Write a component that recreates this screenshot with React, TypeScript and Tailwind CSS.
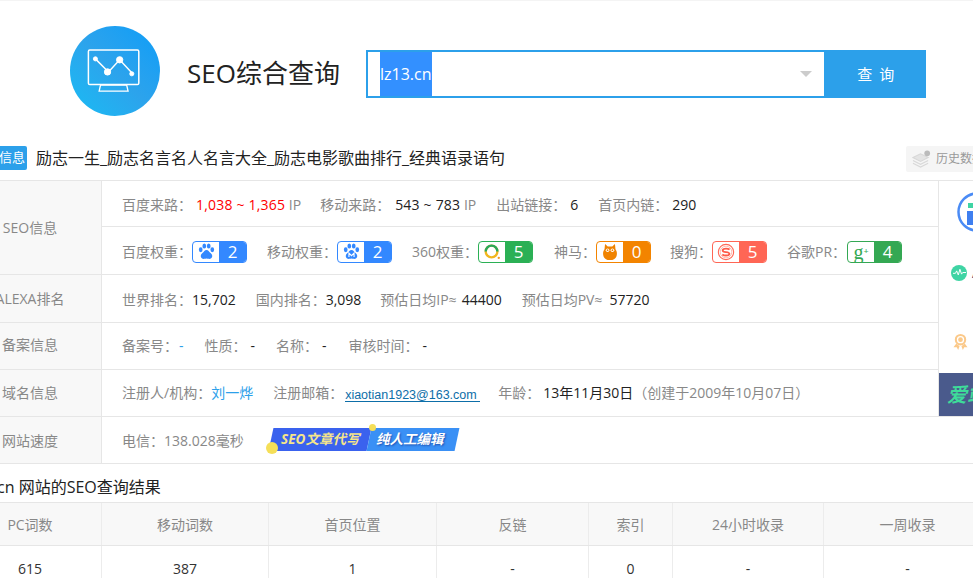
import React from "react";

const FONT = { fontFamily: '"Open Sans","Noto Sans CJK SC",sans-serif' };

function Paw({ m = false }: { m?: boolean }) {
  return (
    <svg viewBox="0 0 20 20" className="w-[17px] h-[17px]">
      <g fill="#3388ff">
        <ellipse cx="3.2" cy="8" rx="2.2" ry="2.9" />
        <ellipse cx="7.4" cy="3.6" rx="2.2" ry="3" />
        <ellipse cx="12.6" cy="3.6" rx="2.2" ry="3" />
        <ellipse cx="16.8" cy="8" rx="2.2" ry="2.9" />
        <path d="M10 8.2c2.2 0 3 2 4.4 3.3 1.6 1.5 2.6 2.6 2.3 4.5-.3 2-2.3 3-4.2 2.6-1-.2-1.6-.5-2.5-.5s-1.500.3-2.500.5c-1.900.4-3.900-.6-4.200-2.600-.3-1.900.7-3 2.300-4.500C7 10.200 7.800 8.200 10 8.200z" />
      </g>
      {m && <path d="M7 16.500v-4.500l3 3 3-3v4.500" fill="none" stroke="#fff" strokeWidth="1.300" />}
    </svg>
  );
}

function Ring360() {
  return (
    <svg viewBox="0 0 20 20" className="w-[18px] h-[18px]">
      <circle cx="9.500" cy="9.500" r="6.500" fill="none" stroke="#f2b61e" strokeWidth="2.600" />
      <path d="M3 9.500a6.500 6.500 0 0 1 13 0" fill="none" stroke="#2aa85a" strokeWidth="2.600" />
      <circle cx="17.500" cy="16.500" r="1.300" fill="#f29a1e" />
    </svg>
  );
}

function Owl() {
  return (
    <svg viewBox="0 0 20 20" className="w-[18px] h-[18px]">
      <path d="M4.500 1l3 3h5l3-3 .6 6c1.400 1.800 1.900 4 1.400 6.500-.7 3.700-3.800 5.500-7.500 5.500s-6.800-1.800-7.500-5.500C2 11 2.500 8.800 3.900 7z" fill="#f08300" />
      <circle cx="7.300" cy="8" r="2" fill="#fff" />
      <circle cx="12.700" cy="8" r="2" fill="#fff" />
      <circle cx="7.300" cy="8" r="1" fill="#f08300" />
      <circle cx="12.700" cy="8" r="1" fill="#f08300" />
    </svg>
  );
}

function Sogou() {
  return (
    <svg viewBox="0 0 20 20" className="w-[18px] h-[18px]">
      <circle cx="10" cy="10" r="8.500" fill="none" stroke="#ff6a58" strokeWidth="1.200" />
      <circle cx="10" cy="10" r="6.500" fill="none" stroke="#ffb3a8" strokeWidth="1" />
      <path d="M14 7.300c-1-.8-2.500-1.100-4-1.100-2 0-3.700.7-3.700 2 0 2.700 7.500 1 7.500 3.700 0 1.300-1.800 2-3.800 2-1.600 0-3.100-.4-4.100-1.200" fill="none" stroke="#ff5a48" strokeWidth="2" />
    </svg>
  );
}

function Badge({
  color,
  value,
  children,
}: {
  color: string;
  value: string;
  children: React.ReactNode;
}) {
  return (
    <span
      className="inline-flex w-[55px] h-[22px] rounded-[4px] border overflow-hidden bg-white"
      style={{ borderColor: color }}
    >
      <span className="w-[26px] flex items-center justify-center">{children}</span>
      <span
        className="flex-1 flex items-center justify-center text-white text-[17px]"
        style={{ backgroundColor: color }}
      >
        {value}
      </span>
    </span>
  );
}

function L({ children }: { children: React.ReactNode }) {
  return <span className="text-[#888888]">{children}</span>;
}

function V({ children, className = "" }: { children: React.ReactNode; className?: string }) {
  return <span className={`text-[#222222] ${className}`}>{children}</span>;
}

function Row({
  label,
  h,
  lc = "",
  children,
}: {
  label: string;
  h: string;
  lc?: string;
  children: React.ReactNode;
}) {
  return (
    <div className={`flex border-b border-[#e6e6e6] ${h}`}>
      <div
        className={`w-[143px] shrink-0 bg-[#f8f8f8] border-r border-[#e6e6e6] flex items-center justify-center text-[14px] text-[#888888] ${lc}`}
      >
        {label}
      </div>
      {children}
    </div>
  );
}

const cols = [
  ["PC词数", "615"],
  ["移动词数", "387"],
  ["首页位置", "1"],
  ["反链", "-"],
  ["索引", "0"],
  ["24小时收录", "-"],
  ["一周收录", "-"],
];
const widths = [
  "w-[143px]",
  "w-[167px]",
  "w-[168px]",
  "w-[152px]",
  "w-[84px]",
  "w-[151px]",
  "w-[168px]",
];

export default function App() {
  return (
    <div
      className="w-[973px] h-[578px] overflow-hidden bg-white relative border-t border-[#f4f4f4]"
      style={FONT}
    >
      <div className="w-[1200px] ml-[-41px]">
        {/* header */}
        <div className="flex items-center pt-[25px] pl-[111px]">
          <div className="w-[90px] h-[90px] rounded-full bg-gradient-to-tr from-[#16bcf4] via-[#2ca3ec] to-[#069df8] flex items-center justify-center">
            <svg viewBox="0 0 60 48" className="w-[56px] h-[46px]" fill="none" stroke="#ffffff">
              <rect x="1.500" y="1.500" width="54" height="37" rx="1.500" strokeWidth="1.600" />
              <path d="M13 45.500l1.500-6.500h28l1.500 6.500z" strokeWidth="1.400" />
              <path d="M9 11l14 14 12-13 14 15" strokeWidth="1.600" />
              <circle cx="9" cy="11" r="2.200" fill="#fff" />
              <circle cx="22" cy="25" r="3.400" fill="#fff" />
              <circle cx="35" cy="12" r="3.400" fill="#fff" />
              <circle cx="48" cy="27" r="2.200" fill="#fff" />
            </svg>
          </div>
          <div className="ml-[27px] mt-[4px] text-[26px] text-[#222222] w-[179px] leading-none">SEO综合查询</div>
          <div className="flex w-[560px] h-[48px] border-2 border-[#2ca0ea] mt-[6px]">
            <div className="flex-1 flex items-stretch pl-[12px] relative">
              <span className="bg-[#3390ff] text-white text-[16px] flex items-center w-[52px] whitespace-nowrap">
                lz13.cn
              </span>
              <span className="absolute right-[12px] top-[19px] w-0 h-0 border-x-[6px] border-x-transparent border-t-[6px] border-t-[#cccccc]" />
            </div>
            <button className="w-[100px] bg-[#2ca0ea] text-white text-[15px] tracking-[1.5px] pl-[5px]">
              查&nbsp;询
            </button>
          </div>
        </div>

        {/* title */}
        <div className="flex items-center mt-[30px] h-[26px] mb-[8px]">
          <span className="ml-[12px] mt-[-2px] w-[56px] h-[24px] rounded-[2px] bg-[#2ca0ea] text-white text-[13px] flex items-center justify-center whitespace-nowrap">
            网站信息
          </span>
          <span className="ml-[9px] mt-[-2px] text-[16px] text-[#222222] w-[870px] whitespace-nowrap">
            励志一生_励志名言名人名言大全_励志电影歌曲排行_经典语录语句
          </span>
          <span className="w-[100px] h-[26px] bg-[#f5f5f5] rounded-[2px] flex items-center pl-[6px] gap-[5px] text-[12px] text-[#999999] whitespace-nowrap">
            <svg viewBox="0 0 20 20" className="w-[19px] h-[19px]" fill="none" stroke="#d8d8d8" strokeWidth="1.200">
              <path d="M1 8l8-4 8 4-8 4z" fill="#e4e4e4" />
              <path d="M1 11l8 4 8-4M1 14l8 4 8-4" />
              <circle cx="16" cy="3.500" r="3" fill="#bbbbbb" stroke="none" />
            </svg>
            历史数据
          </span>
        </div>

        {/* info table */}
        <div className="border-t border-[#e6e6e6] text-[14px]">
          <div className="flex">
            <div className="w-[979px] shrink-0">
              <Row label="SEO信息" h="h-[94px]">
                <div className="flex-1 flex flex-col">
                  <div className="h-[46px] flex items-center pl-[20px] pt-[2px] border-b border-[#e6e6e6]">
                    <L>百度来路：</L>
                    <span className="ml-[4px] text-[#ff0000] tracking-[0.2px]">1,038 ~ 1,365</span>
                    <L>&nbsp;IP</L>
                    <span className="ml-[19px]"><L>移动来路：</L></span>
                    <V className="ml-[5px] tracking-[0.2px]">543 ~ 783</V>
                    <L>&nbsp;IP</L>
                    <span className="ml-[20px]"><L>出站链接：</L></span>
                    <V className="ml-[4px]">6</V>
                    <span className="ml-[20px]"><L>首页内链：</L></span>
                    <V className="ml-[4px]">290</V>
                  </div>
                  <div className="flex-1 flex items-center pl-[20px] pt-[2px]">
                    <L>百度权重：</L>
                    <Badge color="#3388ff" value="2"><Paw /></Badge>
                    <span className="ml-[20px]"><L>移动权重：</L></span>
                    <Badge color="#3388ff" value="2"><Paw m /></Badge>
                    <span className="ml-[20px] w-[66px]"><L>360权重：</L></span>
                    <Badge color="#2bb055" value="5"><Ring360 /></Badge>
                    <span className="ml-[21px]"><L>神马：</L></span>
                    <Badge color="#f38400" value="0"><Owl /></Badge>
                    <span className="ml-[19px]"><L>搜狗：</L></span>
                    <Badge color="#ff6655" value="5"><Sogou /></Badge>
                    <span className="ml-[20px] w-[60px]"><L>谷歌PR：</L></span>
                    <Badge color="#34a853" value="4">
                      <span className="text-[#34a853] text-[20px] leading-none" style={{ fontFamily: '"Liberation Serif",serif' }}>
                        g<sup className="text-[9px] font-bold">+</sup>
                      </span>
                    </Badge>
                  </div>
                </div>
              </Row>
              <Row label="ALEXA排名" h="h-[48px]">
                <div className="flex-1 flex items-center pl-[20px] pt-[2px]">
                  <L>世界排名：</L>
                  <V>15,702</V>
                  <span className="ml-[20px]"><L>国内排名：</L></span>
                  <V>3,098</V>
                  <span className="ml-[19px]"><L>预估日均IP≈</L></span>
                  <V className="ml-[5px]">44400</V>
                  <span className="ml-[20px]"><L>预估日均PV≈</L></span>
                  <V className="ml-[7px]">57720</V>
                </div>
              </Row>
              <Row label="备案信息" h="h-[47px]" lc="pb-[3px]">
                <div className="flex-1 flex items-center pl-[20px] pb-[2px]">
                  <L>备案号：</L>
                  <span className="ml-[1px] text-[#2ca0ea]">-</span>
                  <span className="ml-[21px]"><L>性质：</L></span>
                  <V className="ml-[4px]">-</V>
                  <span className="ml-[21px]"><L>名称：</L></span>
                  <V className="ml-[4px]">-</V>
                  <span className="ml-[22px]"><L>审核时间：</L></span>
                  <V className="ml-[4px]">-</V>
                </div>
              </Row>
              <Row label="域名信息" h="h-[47px]" lc="pb-[2px]">
                <div className="flex-1 flex items-center pl-[20px] pb-[1px]">
                  <L>注册人/机构：</L>
                  <span className="text-[#2ca0ea]">刘一烨</span>
                  <span className="ml-[20px]"><L>注册邮箱：</L></span>
                  <span
                    className="ml-[2px] text-[12.500px] text-[#0d6ea8] border-b border-[#0d6ea8] leading-[12px] mt-[6px]"
                    style={{ fontFamily: '"Liberation Sans",sans-serif' }}
                  >
                    xiaotian1923@163.com&nbsp;
                  </span>
                  <span className="ml-[18px]"><L>年龄：</L></span>
                  <V className="ml-[3px]">13年11月30日</V>
                  <L>（创建于2009年10月07日）</L>
                </div>
              </Row>
            </div>
            <div className="flex-1 border-l border-[#e6e6e6] border-b flex flex-col h-[236px]">
              <div className="ml-[18px] mt-[11px] w-[40px] h-[40px]">
                <svg viewBox="0 0 40 40" className="w-[40px] h-[40px]">
                  <circle cx="20" cy="20" r="18.500" fill="none" stroke="#4a8bf5" strokeWidth="2.500" />
                  <rect x="11" y="11" width="7" height="5" fill="#3fd4a4" />
                  <rect x="10" y="19" width="8" height="14" fill="#3f7ff0" />
                </svg>
              </div>
              <div className="ml-[12px] mt-[30px] flex items-center gap-[5px]">
                <span className="w-[16px] h-[16px] rounded-full bg-[#3fd4a4] flex items-center justify-center">
                  <svg viewBox="0 0 16 16" className="w-[13px] h-[13px]" fill="none" stroke="#fff" strokeWidth="1.200">
                    <path d="M0 9h3l1.500-3 2 5 2-7 2 6 1.500-2H16" />
                  </svg>
                </span>
                <span className="text-[14px] text-[#3a4a80] font-bold whitespace-nowrap">AI</span>
              </div>
              <div className="ml-[14px] mt-[50px]">
                <svg viewBox="0 0 16 19" className="w-[15px] h-[18px]" fill="none">
                  <circle cx="8" cy="7" r="5" stroke="#fbc98a" strokeWidth="2.200" />
                  <circle cx="8" cy="7" r="2.500" fill="#fbc98a" />
                  <path d="M3.500 11L.5 15l3.500.2L5.500 18 7 14M12.500 11l3 4-3.500.2-1.500 2.800L9 14" fill="#fbc98a" />
                </svg>
              </div>
              <div className="mt-auto h-[43px] bg-[#4a5a8c] flex items-center pl-[8px] text-[20px] font-bold italic text-[#3edc9a] whitespace-nowrap">
                爱站
              </div>
            </div>
          </div>
          <Row label="网站速度" h="h-[47px]">
            <div className="flex-1 flex items-center pl-[20px]">
              <L>电信：138.028毫秒</L>
              <div className="relative ml-[27px] flex h-[23px] w-[186px] mt-[-1px] text-[13.500px] font-bold italic whitespace-nowrap">
                <span className="w-[98px] -skew-x-12 bg-[#3a62ee] text-[#f5e58a] flex items-center justify-center">
                  <span className="skew-x-12">SEO文章代写</span>
                </span>
                <span className="w-[88px] -skew-x-12 bg-[#3a90f5] text-white flex items-center justify-center pr-[6px]">
                  <span className="skew-x-12 [text-shadow:1px_1px_2px_#1c4fb0]">纯人工编辑</span>
                </span>
                <span className="absolute left-[-5px] top-[14px] w-[12px] h-[12px] rounded-full bg-[#f5df58]" />
                <span className="absolute left-[98px] top-[-4px] w-[7px] h-[7px] rounded-full bg-[#f5df58]" />
              </div>
            </div>
          </Row>
        </div>

        {/* result heading */}
        <div className="h-[38px] flex items-center pt-[8px] pl-[4px] text-[16px] text-[#222222] whitespace-nowrap">
          lz13.cn 网站的SEO查询结果
        </div>

        {/* result table */}
        <div className="border-t border-[#e6e6e6] text-[14px]">
          <div className="flex h-[43px] bg-[#f8f8f8] border-b border-[#e6e6e6]">
            {cols.map((c, i) => (
              <div
                key={c[0]}
                className={`${widths[i]} shrink-0 border-r border-[#ececec] flex items-center justify-center text-[#888888]`}
              >
                {c[0]}
              </div>
            ))}
          </div>
          <div className="flex h-[44px]">
            {cols.map((c, i) => (
              <div
                key={c[0]}
                className={`${widths[i]} shrink-0 border-r border-[#ececec] flex items-center justify-center text-[#333333]`}
              >
                {c[1]}
              </div>
            ))}
          </div>
        </div>
      </div>
    </div>
  );
}
